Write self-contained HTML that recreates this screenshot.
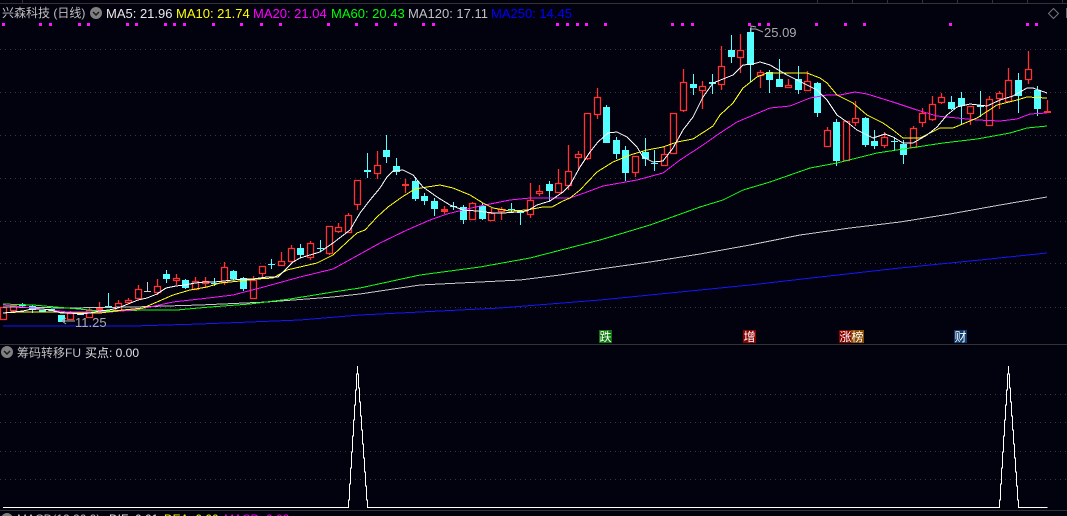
<!DOCTYPE html>
<html><head><meta charset="utf-8"><style>
html,body{margin:0;padding:0;background:#02020e;width:1067px;height:516px;overflow:hidden}
svg{display:block}
text{font-family:"Liberation Sans","Noto Sans CJK SC",sans-serif;font-size:13px}
text.c{font-size:12px}
</style></head><body>
<svg width="1067" height="516" viewBox="0 0 1067 516" xmlns="http://www.w3.org/2000/svg">
<rect width="1067" height="516" fill="#02020e"/>
<g shape-rendering="crispEdges">
<path d="M0 3.5H1067M22.5 0V3M817.5 0V3M852.5 0V3M887.5 0V3M922.5 0V3M957.5 0V3M992.5 0V3M1027.5 0V3M1062.5 0V3M0 344.5H1067M0 510.5H1067" stroke="#333" fill="none"/>
<path d="M0 49.5H1067M0 92.5H1067M0 135.5H1067M0 178.5H1067M0 221.5H1067M0 263.5H1067M0 307.5H1067M0 394.5H1067M0 422.5H1067M0 451.5H1067M0 479.5H1067" stroke="#3a3a3a" stroke-dasharray="1 4" fill="none"/>
<path d="M2 23h3v3h-3zM39 23h3v3h-3zM49 23h3v3h-3zM78 23h3v3h-3zM87 23h3v3h-3zM126 23h3v3h-3zM135 23h3v3h-3zM164 23h3v3h-3zM173 23h3v3h-3zM183 23h3v3h-3zM212 23h3v3h-3zM240 23h3v3h-3zM260 23h3v3h-3zM279 23h3v3h-3zM327 23h3v3h-3zM355 23h3v3h-3zM375 23h3v3h-3zM394 23h3v3h-3zM422 23h3v3h-3zM432 23h3v3h-3zM556 23h3v3h-3zM566 23h3v3h-3zM576 23h3v3h-3zM585 23h3v3h-3zM604 23h3v3h-3zM671 23h3v3h-3zM681 23h3v3h-3zM691 23h3v3h-3zM748 23h3v3h-3zM758 23h3v3h-3zM767 23h3v3h-3zM815 23h3v3h-3zM844 23h3v3h-3zM863 23h3v3h-3zM949 23h3v3h-3zM1026 23h3v3h-3zM1035 23h3v3h-3z" fill="#ff14ff"/>
</g>
<!-- red wicks -->
<path stroke="#ff3232" stroke-width="1.3" fill="none" d="M13.5 304V312M70.5 311V320M89.5 308V318M99.5 302V311M118.5 300V311M128.5 298V303M138.5 285V299M157.5 279V295M176.5 274V285M195.5 277V290M205.5 277V288M224.5 262V285M253.5 276V298M262.5 266V277M281.5 252V266M291.5 245V263M310.5 241V260M329.5 226V255M338.5 223V233M348.5 213V232M357.5 180V210M377.5 151V179M405.5 179V193M444.5 206V214M472.5 202V220M491.5 208V220M501.5 207V220M530.5 183V218M539.5 185V196M558.5 169V193M568.5 145V190M578.5 151V169M587.5 113V160M597.5 88V119M635.5 156V177M664.5 147V165M683.5 69V112M702.5 81V109M721.5 46V90M740.5 34V73M760.5 70V88M788.5 79V87M807.5 71V90M827.5 127V146M855.5 101V126M884.5 132V148M913.5 126V147M922.5 108V127M932.5 96V121M941.5 93V104M970.5 106V125M989.5 96V126M999.5 91V109M1008.5 68V101M1028.5 51V84M1047.5 100V113"/>
<!-- red bodies -->
<path stroke="#ff3232" stroke-width="1.3" fill="#02020e" d="M0.5 307.5h6v12h-6zM10.5 305.5h6v5h-6zM67.5 313.5h6v6h-6zM86.5 310.5h6v7h-6zM115.5 303.5h6v7h-6zM125.5 300.5h6v2h-6zM135.5 289.5h6v9h-6zM154.5 286.5h6v6h-6zM173.5 278.5h6v2h-6zM192.5 281.5h6v8h-6zM202.5 281.5h6v2h-6zM221.5 267.5h6v15h-6zM250.5 280.5h6v18h-6zM259.5 266.5h6v7h-6zM278.5 261.5h6v4h-6zM288.5 248.5h6v13h-6zM307.5 243.5h6v14h-6zM326.5 226.5h6v27h-6zM335.5 227.5h6v4h-6zM345.5 215.5h6v17h-6zM354.5 180.5h6v24h-6zM374.5 165.5h6v8h-6zM469.5 203.5h6v16h-6zM488.5 213.5h6v7h-6zM498.5 209.5h6v2h-6zM527.5 200.5h6v14h-6zM536.5 191.5h6v2h-6zM555.5 183.5h6v9h-6zM565.5 171.5h6v14h-6zM575.5 154.5h6v3h-6zM584.5 113.5h6v45h-6zM594.5 97.5h6v17h-6zM632.5 156.5h6v16h-6zM661.5 154.5h6v11h-6zM670.5 113.5h6v40h-6zM680.5 82.5h6v28h-6zM699.5 86.5h6v4h-6zM718.5 66.5h6v18h-6zM737.5 50.5h6v7h-6zM757.5 72.5h6v3h-6zM785.5 85.5h6v2h-6zM804.5 81.5h6v9h-6zM824.5 130.5h6v16h-6zM843.5 121.5h6v39h-6zM852.5 118.5h6v4h-6zM881.5 137.5h6v8h-6zM910.5 128.5h6v19h-6zM919.5 113.5h6v9h-6zM929.5 104.5h6v15h-6zM938.5 97.5h6v5h-6zM967.5 106.5h6v7h-6zM986.5 99.5h6v26h-6zM996.5 93.5h6v5h-6zM1005.5 80.5h6v21h-6zM1025.5 69.5h6v10h-6z"/>
<g shape-rendering="crispEdges">
<!-- solid red -->
<path fill="#ff3232" d="M96 308h7v3h-7zM402 184h7v2h-7zM441 209h7v3h-7zM1044 111h7v2h-7z"/>
<!-- cyan wicks -->
<path stroke="#54ffff" fill="none" d="M22.5 303V307M32.5 305V313M108.5 293V308M166.5 270V283M185.5 279V289M214.5 278V286M233.5 270V280M243.5 277V291M271.5 259V269M300.5 244V258M320.5 240V252M367.5 153V178M386.5 135V163M396.5 158V175M415.5 177V201M424.5 193V205M434.5 198V216M453.5 202V210M463.5 205V224M482.5 203V220M511.5 203V213M520.5 211V225M549.5 181V201M606.5 105V143M616.5 137V159M625.5 146V181M645.5 138V166M654.5 150V171M693.5 74V95M712.5 74V94M731.5 35V63M750.5 28V82M769.5 70V93M779.5 59V87M798.5 66V94M817.5 82V117M836.5 119V166M865.5 117V147M874.5 130V149M894.5 137V150M903.5 140V164M951.5 96V110M961.5 92V125M980.5 91V117M1018.5 73V113M1037.5 86V116"/>
<!-- cyan bodies -->
<path fill="#54ffff" d="M19 305h7v1h-7zM29 306h7v4h-7zM39 310h7v2h-7zM48 309h7v2h-7zM58 315h7v7h-7zM77 313h7v2h-7zM105 306h7v2h-7zM163 274h7v5h-7zM182 280h7v8h-7zM211 283h7v1h-7zM230 271h7v8h-7zM240 278h7v11h-7zM268 264h7v1h-7zM297 248h7v7h-7zM317 248h7v1h-7zM364 170h7v2h-7zM383 150h7v7h-7zM393 166h7v6h-7zM412 181h7v18h-7zM421 196h7v5h-7zM431 201h7v8h-7zM450 206h7v1h-7zM460 207h7v13h-7zM479 206h7v13h-7zM508 209h7v1h-7zM517 211h7v2h-7zM546 184h7v7h-7zM603 107h7v36h-7zM613 140h7v14h-7zM622 150h7v23h-7zM642 152h7v7h-7zM651 163h7v1h-7zM690 84h7v4h-7zM709 82h7v2h-7zM728 50h7v7h-7zM747 32h7v33h-7zM766 72h7v8h-7zM776 79h7v8h-7zM795 79h7v11h-7zM814 83h7v30h-7zM833 122h7v39h-7zM862 118h7v27h-7zM871 141h7v5h-7zM891 141h7v1h-7zM900 144h7v11h-7zM948 102h7v7h-7zM958 98h7v8h-7zM977 105h7v2h-7zM1015 80h7v16h-7zM1034 90h7v19h-7z"/>
<path stroke="#cccccc" fill="none" d="M147.5 282V291M144 291.5H151"/>
<!-- MA lines -->
<polyline fill="none" stroke="#1414ff" points="3,326 133,326 200,324 300,320 360,315 420,312 500,308 600,300 680,292 750,285 820,277 900,268 980,260 1047,253"/>
<polyline fill="none" stroke="#c8c8c8" points="3,307 67,308 133,307 200,305 267,302 333,297 360,294 420,285 480,282 520,280 560,275 600,269 650,262 700,254 750,245 800,235 850,228 900,222 950,214 1000,205 1047,197"/>
<polyline fill="none" stroke="#14ff14" points="3,304 33,305 67,308 100,311 150,310 177,310 210,307 250,304 290,299 333,292 360,288 420,275 480,267 530,258 600,240 650,225 700,207 723,200 743,190 770,182 810,168 837,163 877,153 910,148 943,143 977,139 1010,133 1027,128 1047,126"/>
<polyline fill="none" stroke="#ff14ff" points="3,305 33,308 67,312 110,312 133,310 150,307 173,302 200,299 233,295 260,288 300,277 333,269 353,258 380,243 407,230 430,220 447,214 463,210 480,206 510,200 530,198 563,198 570,198 587,192 603,186 637,180 663,173 680,160 703,145 720,133 737,122 770,108 790,106 810,98 827,95 840,95 855,92 867,94 893,102 917,110 937,116 957,118 977,120 1000,121 1017,119 1030,114 1047,113"/>
<polyline fill="none" stroke="#ffff14" points="3,313 20,312 43,312 57,312 67,313 100,313 123,310 143,308 157,302 173,295 190,290 207,287 220,283 240,281 257,279 273,278 287,270 317,263 333,255 347,242 357,233 365,230 377,217 388,207 402,197 415,189 427,187 440,185 453,188 470,195 483,203 493,208 510,211 527,210 543,207 552,207 563,201 570,198 580,190 597,172 613,162 630,155 647,150 663,147 677,142 693,139 713,126 720,115 733,103 743,88 757,77 767,73 807,73 820,78 827,83 837,95 853,103 867,115 883,123 893,130 903,138 910,138 920,138 940,128 953,128 977,118 997,105 1017,100 1027,97 1047,98"/>
<polyline fill="none" stroke="#ffffff" points="3,313 13,312 23,311 32,309 42,309 51,310 61,313 70,313 80,314 90,313 99,311 109,310 118,308 128,304 138,300 147,298 157,294 166,288 176,286 185,285 195,283 205,282 214,282 224,281 233,280 243,279 253,279 267,277 278,277 283,272 293,262 300,258 320,252 333,243 350,230 360,213 370,200 380,188 387,177 393,171 403,170 413,175 423,187 437,197 450,205 463,210 477,211 493,213 503,213 517,212 527,211 537,205 550,201 563,192 570,185 580,167 590,152 598,142 608,133 617,132 627,137 637,147 643,157 653,162 663,161 673,148 683,130 693,117 703,97 713,83 723,79 733,75 743,65 753,64 760,62 770,65 787,75 803,83 817,90 827,100 837,115 847,122 857,130 873,138 885,134 893,137 903,143 913,143 927,135 937,127 947,115 957,107 970,104 987,106 1000,100 1013,96 1027,88 1033,88 1047,93"/>
<!-- lower pane -->
<path fill="none" stroke="#ffffff" stroke-linejoin="miter" d="M3 507.5H348.5V500H349.5V484H350.5V468H351.5V452H352.5V436H353.5V420H354.5V405H355.5V390H356.5V374H357.5V366V374H358.5V388H359.5V402H360.5V416H361.5V430H362.5V444H363.5V458H364.5V472H365.5V486H366.5V500H367.5V507.5H999.5V500H1000.5V484H1001.5V468H1002.5V452H1003.5V436H1004.5V420H1005.5V405H1006.5V390H1007.5V374H1008.5V366V374H1009.5V388H1010.5V402H1011.5V416H1012.5V430H1013.5V444H1014.5V458H1015.5V472H1016.5V486H1017.5V500H1018.5V507.5H1047.5"/>
<!-- label backgrounds -->
<rect x="599" y="330" width="13" height="13" fill="#0a780a"/>
<rect x="743" y="330" width="13" height="13" fill="#8c0000"/>
<rect x="839" y="330" width="13" height="13" fill="#8c0000"/>
<rect x="851" y="330" width="13" height="13" fill="#8a4a00"/>
<rect x="954" y="330" width="13" height="13" fill="#0c3c70"/>
<path d="M1066 8h1v10h-1z" fill="#666"/>
</g>
<!-- arrows -->
<path d="M62 321H75M62 321l4-3M62 321l4 3" stroke="#aaa" fill="none"/>
<path d="M751 26V32M751 26l5 1M751 29l5 0M756 29L763 32" stroke="#aaa" fill="none"/>
<path d="M1053.5 8.5l5 5-5 5-5-5z" stroke="#777" fill="none"/>
<!-- header icons -->
<circle cx="96" cy="13" r="6" fill="#808080"/><path d="M93 12l3 3 3-3" stroke="#1a1a1a" stroke-width="1.5" fill="none"/>
<circle cx="7" cy="352" r="6" fill="#808080"/><path d="M4 351l3 3 3-3" stroke="#1a1a1a" stroke-width="1.5" fill="none"/>
<circle cx="7" cy="519" r="6" fill="#808080"/>
<!-- text -->
<text class="c" x="2" y="17" fill="#c0c0c0">兴森科技 (日线)</text>
<text x="106" y="18" fill="#e8e8e8">MA5: 21.96</text>
<text x="176" y="18" fill="#ffff00">MA10: 21.74</text>
<text x="253" y="18" fill="#ff00ff">MA20: 21.04</text>
<text x="331" y="18" fill="#00ff00">MA60: 20.43</text>
<text x="408" y="18" fill="#c0c0c0">MA120: 17.11</text>
<text x="491" y="18" fill="#0000ff">MA250: 14.45</text>
<text x="75" y="327" fill="#aaaaaa">11.25</text>
<text x="764" y="37" fill="#aaaaaa">25.09</text>
<text class="c" x="17" y="357" fill="#c0c0c0">筹码转移FU</text>
<text class="c" x="85" y="357" fill="#e0e0e0">买点: 0.00</text>
<text class="c" x="17" y="523" fill="#c0c0c0">MACD(12,26,9)</text>
<text class="c" x="109" y="523" fill="#e8e8e8">DIF: 0.01</text>
<text class="c" x="164" y="523" fill="#ffff00">DEA: 0.00</text>
<text class="c" x="224" y="523" fill="#ff00ff">MACD: 0.02</text>
<text class="c" x="599.5" y="341" fill="#fff">跌</text>
<text class="c" x="743.5" y="341" fill="#fff">增</text>
<text class="c" x="839.5" y="341" fill="#fff">涨</text>
<text class="c" x="851.5" y="341" fill="#fff">榜</text>
<text class="c" x="954.5" y="341" fill="#fff">财</text>
</svg>
</body></html>
